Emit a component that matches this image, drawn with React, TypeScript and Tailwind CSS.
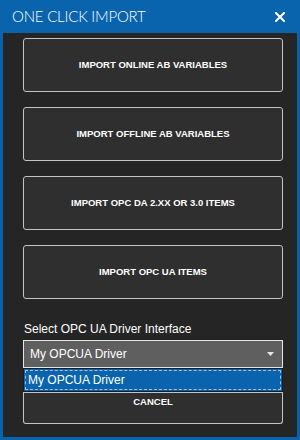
import React from "react";

const importButtons = [
   "IMPORT ONLINE AB VARIABLES",
   "IMPORT OFFLINE AB VARIABLES",
   "IMPORT OPC DA 2.XX OR 3.0 ITEMS",
   "IMPORT OPC UA ITEMS",
];

function CloseIcon() {
   return (
      <svg width="10" height="10" viewBox="0 0 10 10" className="block">
         <path d="M1 1 L9 9 M9 1 L1 9" stroke="#ffffff" strokeWidth="2" strokeLinecap="square" />
      </svg>
   );
}

export default function App() {
   return (
      <div
         className="w-[300px] h-[440px] bg-[#0a64ad] px-[3px] pb-[3px] flex flex-col"
         style={{ fontFamily: '"Liberation Sans", Arial, sans-serif' }}
      >
         {/* title bar */}
         <div className="h-[33px] flex items-center justify-between pl-[9px] pr-[12px] shrink-0">
            <span
               className="text-white text-[15px] font-light leading-none tracking-[-0.2px]"
               style={{ fontFamily: 'Lato, "Liberation Sans", sans-serif' }}
            >
               ONE CLICK IMPORT
            </span>
            <CloseIcon />
         </div>

         {/* body */}
         <div className="flex-1 bg-[#252525] pl-[20px] pt-[5px]">
            <div className="w-[260px] flex flex-col gap-[15px]">
               {importButtons.map(label => (
                  <button
                     key={label}
                     className="h-[54px] w-full rounded-[3px] border border-[#c4c4c4] bg-[#2f2f2f] text-white text-[9.5px] font-bold flex items-center justify-center"
                  >
                     {label}
                  </button>
               ))}
            </div>

            <div className="w-[260px] mt-[23px]">
               <div className="text-white text-[12px] leading-[14px] mb-[4px] pl-[1px]">
                  Select OPC UA Driver Interface
               </div>

               {/* select */}
               <div className="h-[28px] border border-[#e6e6e6] bg-[#5f5f5f] flex items-center justify-between pl-[6px] pr-[8px]">
                  <span className="text-white text-[12px]">My OPCUA Driver</span>
                  <svg width="7" height="4" viewBox="0 0 7 4" className="block">
                     <path d="M0 0 L7 0 L3.5 4 Z" fill="#e8e8e8" />
                  </svg>
               </div>

               {/* cancel with open dropdown on top */}
               <div className="relative">
                  <button className="h-[56px] w-full rounded-b-[3px] border border-t-0 border-[#c4c4c4] bg-[#2f2f2f] text-white text-[9.5px] font-bold leading-[12px] pt-[28px] flex justify-center items-start">
                     CANCEL
                  </button>
                  <div className="absolute left-0 right-0 top-0 h-[25px] bg-[#2f2f2f] border-b border-[#c4c4c4]">
                     <div className="h-[24px] border border-[#1b1b1b] bg-[#0a64ad] p-[1px]">
                        <div className="h-full border border-dashed border-[#9cc3ea] flex items-center pl-[2px]">
                           <span className="text-white text-[12px] leading-none">My OPCUA Driver</span>
                        </div>
                     </div>
                  </div>
               </div>
            </div>
         </div>
      </div>
   );
}
